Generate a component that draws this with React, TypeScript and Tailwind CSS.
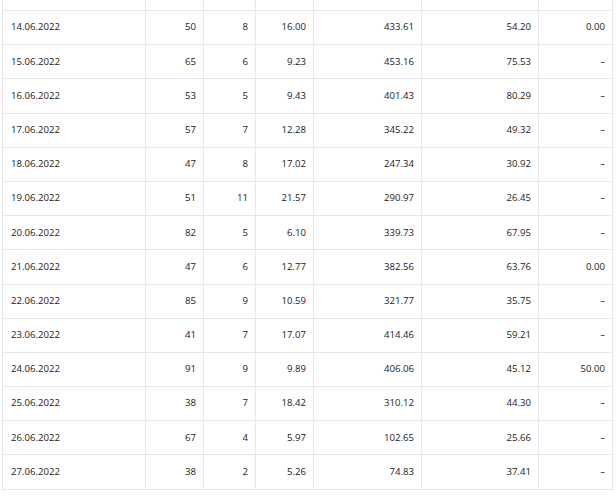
const rows: string[][] = [
  ['14.06.2022', '50', '8', '16.00', '433.61', '54.20', '0.00'],
  ['15.06.2022', '65', '6', '9.23', '453.16', '75.53', '–'],
  ['16.06.2022', '53', '5', '9.43', '401.43', '80.29', '–'],
  ['17.06.2022', '57', '7', '12.28', '345.22', '49.32', '–'],
  ['18.06.2022', '47', '8', '17.02', '247.34', '30.92', '–'],
  ['19.06.2022', '51', '11', '21.57', '290.97', '26.45', '–'],
  ['20.06.2022', '82', '5', '6.10', '339.73', '67.95', '–'],
  ['21.06.2022', '47', '6', '12.77', '382.56', '63.76', '0.00'],
  ['22.06.2022', '85', '9', '10.59', '321.77', '35.75', '–'],
  ['23.06.2022', '41', '7', '17.07', '414.46', '59.21', '–'],
  ['24.06.2022', '91', '9', '9.89', '406.06', '45.12', '50.00'],
  ['25.06.2022', '38', '7', '18.42', '310.12', '44.30', '–'],
  ['26.06.2022', '67', '4', '5.97', '102.65', '25.66', '–'],
  ['27.06.2022', '38', '2', '5.26', '74.83', '37.41', '–'],
];

const grid = 'grid grid-cols-[143px_58px_52px_58px_108px_117px_74px]';

export default function App() {
  return (
    <div
      className="w-[616px] h-[502px] bg-white overflow-hidden text-[9.6px] text-[#1a1a1a]"
      style={{ fontFamily: '"Open Sans", "Liberation Sans", sans-serif' }}
    >
      <div className="ml-[2px] w-[611px] border-l border-[#e7e7eb]">
        {/* cut-off row above */}
        <div className={`${grid} h-[11px] border-b border-[#e7e7eb]`}>
          {rows[0].map((_, i) => (
            <div key={i} className="border-r border-[#e7e7eb]" />
          ))}
        </div>

        {rows.map((row) => (
          <div key={row[0]} className={`${grid} h-[34.2px] border-b border-[#e7e7eb]`}>
            {row.map((cell, i) => (
              <div
                key={i}
                className={
                  i === 0
                    ? 'flex items-center pl-2 border-r border-[#e7e7eb]'
                    : 'flex items-center justify-end pr-[7px] border-r border-[#e7e7eb]'
                }
              >
                {cell}
              </div>
            ))}
          </div>
        ))}
      </div>
    </div>
  );
}
